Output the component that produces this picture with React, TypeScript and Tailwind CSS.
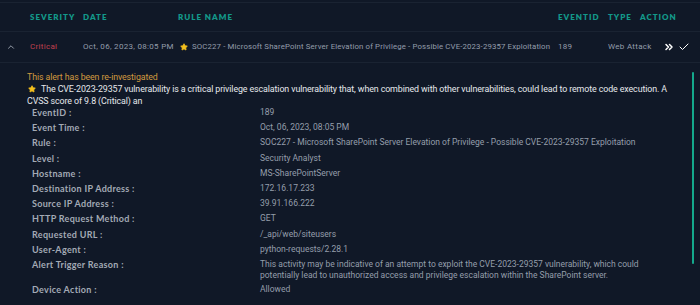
import { Check, ChevronUp, ChevronsRight, Star } from 'lucide-react'

const DETAILS: { label: string; value: string }[] = [
  { label: 'EventID :', value: '189' },
  { label: 'Event Time :', value: 'Oct, 06, 2023, 08:05 PM' },
  { label: 'Rule :', value: 'SOC227 - Microsoft SharePoint Server Elevation of Privilege - Possible CVE-2023-29357 Exploitation' },
  { label: 'Level :', value: 'Security Analyst' },
  { label: 'Hostname :', value: 'MS-SharePointServer' },
  { label: 'Destination IP Address :', value: '172.16.17.233' },
  { label: 'Source IP Address :', value: '39.91.166.222' },
  { label: 'HTTP Request Method :', value: 'GET' },
  { label: 'Requested URL :', value: '/_api/web/siteusers' },
  { label: 'User-Agent :', value: 'python-requests/2.28.1' },
  {
    label: 'Alert Trigger Reason :',
    value:
      'This activity may be indicative of an attempt to exploit the CVE-2023-29357 vulnerability, which could potentially lead to unauthorized access and privilege escalation within the SharePoint server.',
  },
  { label: 'Device Action :', value: 'Allowed' },
]

export default function App() {
  return (
    <div className="w-[700px] h-[305px] overflow-hidden bg-[#101827] font-['Lato',sans-serif]">
      <div className="pt-[2px]">
        <div className="border-t border-[#1a2332]" />

        {/* header */}
        <div className="flex items-center h-[29px] border-b border-[#1a2332] text-[8px] font-extrabold tracking-[1px] text-[#13998a] uppercase">
          <div className="w-[30px]" />
          <div className="w-[53px]">Severity</div>
          <div className="w-[95px]">Date</div>
          <div className="w-[380px]">Rule Name</div>
          <div className="w-[50px]">EventID</div>
          <div className="w-[32px]">Type</div>
          <div>Action</div>
        </div>

        {/* alert row */}
        <div className="flex items-center h-[31px] border-b border-[#1a2332] text-[8px] tracking-[0.3px] font-['Roboto',sans-serif] text-[#949dab] whitespace-nowrap">
          <div className="w-[30px] pl-[6px]">
            <ChevronUp size={10} strokeWidth={2.2} className="text-[#a0a7b3]" />
          </div>
          <div className="w-[53px] text-[#c0404e]">Critical</div>
          <div className="w-[95px]">Oct, 06, 2023, 08:05 PM</div>
          <div className="w-[380px] flex items-center gap-[4px] pl-[2px]">
            <Star size={8} fill="#f4c01e" stroke="#f4c01e" className="shrink-0" />
            <span className="text-[7.8px] tracking-[0.14px]">
              SOC227 - Microsoft SharePoint Server Elevation of Privilege - Possible CVE-2023-29357 Exploitation
            </span>
          </div>
          <div className="w-[50px]">189</div>
          <div className="w-[32px]">Web Attack</div>
          <div className="flex items-center gap-[3px] pl-[23px] text-white">
            <ChevronsRight size={12} strokeWidth={3} />
            <Check size={12} strokeWidth={2} />
          </div>
        </div>

        {/* expanded */}
        <div className="flex">
          <div className="flex-1 pl-[27px] pr-[14px] pt-[8px] font-['Roboto',sans-serif]">
            <div className="text-[8.8px] leading-[12px] text-[#d29a3f] tracking-[-0.1px]">
              This alert has been re-investigated
            </div>
            <div className="text-[8.85px] leading-[12px] text-[#e6e8ec] tracking-[-0.1px]">
              <Star size={8} fill="#f4c01e" stroke="#f4c01e" className="inline-block mr-[5px] ml-[1px] -mt-[2px]" />
              The CVE-2023-29357 vulnerability is a critical privilege escalation vulnerability that, when combined with other vulnerabilities, could lead to remote code execution. A CVSS score of 9.8 (Critical) an
            </div>
            <div className="-mt-[2px] pl-[5px]">
              {DETAILS.map((d) => (
                <div key={d.label} className="flex py-[2px]">
                  <div className="w-[228px] shrink-0 font-['Lato',sans-serif] text-[9px] leading-[11.2px] font-bold tracking-[0.3px] text-[#a3aab5]">
                    {d.label}
                  </div>
                  <div className="w-[395px] text-[8.5px] leading-[10.5px] text-[#959eab]">{d.value}</div>
                </div>
              ))}
            </div>
          </div>
          <div className="w-[8px] pt-[9px]">
            <div className="w-[2px] h-[192px] bg-[#14a88c] rounded-full" />
          </div>
        </div>
      </div>
    </div>
  )
}
